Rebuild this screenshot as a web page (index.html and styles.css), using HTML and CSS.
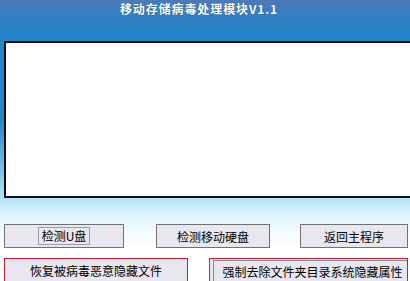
FILE: index.html
```html
<!DOCTYPE html>
<html lang="zh-CN">
<head>
    <meta charset="UTF-8">
    <title>移动存储病毒处理模块V1.1</title>
    <link rel="stylesheet" href="styles.css">
</head>
<body>
    <div class="window">
        <div class="title">移动存储病毒处理模块V1.1</div>

        <div class="log"></div>

        <div class="row row-top">
            <div class="btn btn-udisk"><span class="focus">检测U盘</span></div>
            <div class="btn btn-hdd">检测移动硬盘</div>
            <div class="btn btn-back">返回主程序</div>
        </div>

        <div class="row row-bottom">
            <div class="btn btn-red btn-restore">恢复被病毒恶意隐藏文件</div>
            <div class="btn-red btn-force">
                <div class="btn-inner">强制去除文件夹目录系统隐藏属性</div>
            </div>
        </div>
    </div>
</body>
</html>
```

FILE: styles.css
```css
html, body {
    margin: 0;
    padding: 0;
}
body {
    width: 410px;
    height: 281px;
    overflow: hidden;
    font-family: "SimSun", "Noto Sans CJK SC", "DejaVu Sans", sans-serif;
    font-size: 12px;
    color: #000;
    background: linear-gradient(to bottom,
        #4c7ab8 0px,
        #2d80c3 22px,
        #1d88c9 40px,
        #1d88c9 120px,
        #b2e4fa 198px,
        #dcf3fd 214px,
        #f5fbff 234px,
        #ffffff 250px);
}
.window {
    position: relative;
    height: 281px;
}
.title {
    height: 41px;
    box-sizing: border-box;
    padding: 1px 12px 0 0;
    text-align: center;
    color: #fff;
    font-weight: bold;
    font-size: 12px;
    line-height: 15px;
    letter-spacing: 0.9px;
    text-shadow: 0 0 1px rgba(0, 40, 90, 0.6);
}
.log {
    margin-left: 4px;
    width: 420px;
    height: 153px;
    background: #fff;
    border-top: 2px solid #0a0a1a;
    border-left: 2px solid #0a0a1a;
    border-bottom: 2px solid #111;
}
.row {
    display: flex;
    padding-left: 4px;
}
.row-top {
    margin-top: 26px;
}
.row-bottom {
    margin-top: 10px;
}
.btn {
    box-sizing: border-box;
    display: flex;
    align-items: center;
    justify-content: center;
    background: #e8e6ee;
    border: 1px solid #707070;
    height: 24px;
}
.btn-udisk { width: 120px; }
.btn-hdd { width: 114px; margin-left: 32px; }
.btn-back { width: 108px; margin-left: 30px; }
.focus {
    display: inline-block;
    padding: 1px 3px;
    line-height: 14px;
    border: 1px solid #9a98b4;
}
.btn-red {
    border: 1px solid #d21c2e;
}
.btn-restore {
    width: 184px;
    height: 24px;
}
.btn-force {
    box-sizing: border-box;
    width: 199px;
    height: 24px;
    margin-left: 21px;
    padding: 1px 0 0 3px;
    background: #e8e6ee;
}
.btn-inner {
    height: 100%;
    box-sizing: border-box;
    border-top: 1px solid #8a8a8a;
    border-left: 1px solid #8a8a8a;
    display: flex;
    align-items: center;
    justify-content: center;
    padding-left: 4px;
}
```
